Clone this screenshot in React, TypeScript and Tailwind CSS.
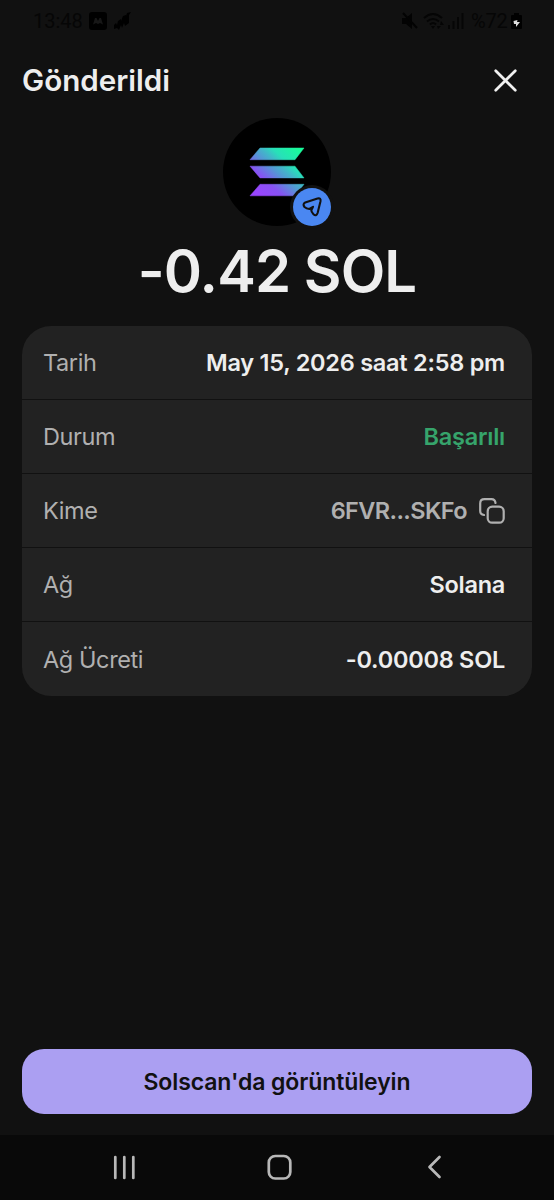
import React from 'react';

function StatusBar() {
  return (
    <div className="flex h-[42px] items-center justify-between pl-[33px] pr-[31px] text-[20px] text-[#060606]">
      <div className="flex items-center">
        <span className="w-[49px] font-['Roboto']">
          13:48
        </span>
        <svg className="ml-[7px]" width="18" height="18" viewBox="0 0 18 18">
          <rect width="18" height="18" rx="3" fill="#000" />
          <path d="M4 12.500L6 6h1.500l1.500 3 1.500-3H12l2 6.500-3-1.500-2 1-2-1z" fill="#171717" />
        </svg>
        <svg className="ml-[6px]" width="18" height="18" viewBox="0 0 18 18">
          <path d="M1 17v-4l2-2 1 2 1-4 3-2v2l2-5 3-1v1l1-3 4-1-2 3v8l-4 3-1-3-2 5-1-3-2 5-2-2z" fill="#000" />
        </svg>
      </div>
      <div className="flex items-center">
        <svg width="18" height="18" viewBox="0 0 18 18">
          <path d="M1 6h4l6-5v16l-6-5H1z" fill="#030303" />
          <path d="M2 1l14 15" stroke="#030303" strokeWidth="2" />
        </svg>
        <svg className="ml-[4px]" width="22" height="18" viewBox="0 0 22 18" fill="none" stroke="#050505" strokeWidth="2">
          <path d="M1 6q9-8 18 0M4 9.500q6-5 12 0M7 12.500q3-3 6 0" />
          <path d="M10 17l-2-3h4zM18 9l3 4h-4zM15 17l3-3h-4z" fill="#050505" stroke="none" />
        </svg>
        <svg className="ml-[3px]" width="16" height="16" viewBox="0 0 16 16" fill="#060606">
          <path d="M0 12h2v4H0zM4.500 8h2v8h-2zM9 4h2v12H9zM13.500 0h2v16h-2z" />
        </svg>
        <span className="ml-[7px] w-[39px] font-['Roboto'] tracking-[-0.2px]">%72</span>
        <svg width="13" height="18" viewBox="0 0 13 18">
          <path d="M4 1h5v2h2q1 0 1 1v12q0 1-1 1H2q-1 0-1-1V4q0-1 1-1h2z" fill="#000" />
          <path d="M3.500 9l4-1-.5 2 3 0-4 5 0-3-2 0z" fill="#ddd" />
        </svg>
      </div>
    </div>
  );
}

function TokenLogo() {
  return (
    <div className="mx-auto mt-[8px] h-[108px] w-[108px]">
      <svg width="112" height="112" viewBox="0 0 112 112" fill="none">
        <defs>
          <linearGradient id="sol" gradientUnits="userSpaceOnUse" x1="32" y1="80" x2="77" y2="30">
            <stop offset="0.080" stopColor="#9945ff" />
            <stop offset="0.300" stopColor="#8752f3" />
            <stop offset="0.500" stopColor="#5497d5" />
            <stop offset="0.600" stopColor="#43b4ca" />
            <stop offset="0.720" stopColor="#28e0b9" />
            <stop offset="0.970" stopColor="#19fb9b" />
          </linearGradient>
        </defs>
        <circle cx="54" cy="54" r="54" fill="#000" />
        <path d="M37 30h44l-9 11.700H27zM27 48.200h45l9 11.700H37zM37 66.300h44l-9 11.500H27z" fill="url(#sol)" stroke="url(#sol)" strokeWidth="0.500" strokeLinejoin="round" />
        <circle cx="89" cy="89" r="22" fill="#111" />
        <circle cx="89" cy="89" r="19" fill="#4a87f2" />
        <path d="M82.200 84.500L94.500 80.600Q98.200 79.600 97.500 83.200L94.600 95Q93.200 98.800 90.500 96.300Q88.300 94 88.300 92.300L90 88.800L86.300 91Q83.500 90.800 81.500 89Q79.300 86.100 82.200 84.500z" stroke="#111" strokeWidth="2.100" strokeLinejoin="round" />
      </svg>
    </div>
  );
}

function Row({ label, children, last = false }: { label: string; children: React.ReactNode; last?: boolean }) {
  return (
    <div className={`flex h-[74px] items-center justify-between pl-[21px] pr-[27px] pt-px ${last ? '' : 'border-b-[1.500px] border-[#111]'}`}>
      <span className="text-[23.5px] tracking-[-0.4px] text-[#b0b0b0]">{label}</span>
      <span className="flex items-center text-[23.5px] font-semibold tracking-[-0.25px] text-[#eee]">{children}</span>
    </div>
  );
}

export default function App() {
  return (
    <div className="flex h-[1200px] w-[554px] flex-col overflow-hidden bg-[#111] font-['Inter',sans-serif] text-[#eee]">
      <StatusBar />
      <header className="flex h-[68px] items-center justify-between pb-0 pl-[22px] pr-[37px] pt-[9px]">
        <h1 className="text-[29.6px] font-semibold leading-none">Gönderildi</h1>
        <svg width="23" height="23" viewBox="0 0 23 23" stroke="#f0f0f0" strokeWidth="2.700" strokeLinecap="round">
          <path d="M1.700 1.700l19.600 19.600M21.300 1.700L1.700 21.300" />
        </svg>
      </header>
      <TokenLogo />
      <div className="mt-[16px] text-center text-[58px] font-semibold leading-[58px] tracking-[-0.9px]">-0.42 SOL</div>
      <section className="mx-[22px] mt-[26px] h-[370px] shrink-0 overflow-hidden rounded-[29px] bg-[#222]">
        <Row label="Tarih">May 15, 2026 saat 2:58 pm</Row>
        <Row label="Durum"><span className="text-[#36a46b]">Başarılı</span></Row>
        <Row label="Kime">
          <span className="tracking-[-0.6px] text-[#b0b0b0]">6FVR...SKFo</span>
          <svg className="ml-[12px]" width="26" height="26" viewBox="0 0 26 26" fill="none" stroke="#b0b0b0" strokeWidth="2.200" strokeLinecap="round">
            <rect x="8.700" y="8.700" width="16" height="16" rx="4.500" />
            <path d="M5 17Q1.200 16.500 1.200 13V5.500Q1.200 1.200 5.500 1.200h7q3.500 0 4 3.800" />
          </svg>
        </Row>
        <Row label="Ağ">Solana</Row>
        <Row label="Ağ Ücreti" last>-0.00008 SOL</Row>
      </section>
      <button className="mx-[22px] mt-auto h-[65px] shrink-0 rounded-[22px] bg-[#ab9ff2] pt-[2px] text-[23px] font-semibold tracking-[-0.1px] text-[#111]">Solscan'da görüntüleyin</button>
      <nav className="mt-[21px] flex h-[65px] shrink-0 items-center bg-[#090909] pl-[113px]">
        <svg width="330" height="28" viewBox="0 0 330 28" fill="none" stroke="#b8b8b8" strokeWidth="2.700" strokeLinecap="round">
          <path d="M2.300 3v21M11.300 3v21M20.300 3v21" />
          <rect x="155.800" y="2" width="21.500" height="22.500" rx="6.500" />
          <path d="M326.500 3L316.500 13l10 10" strokeLinejoin="round" />
        </svg>
      </nav>
    </div>
  );
}
